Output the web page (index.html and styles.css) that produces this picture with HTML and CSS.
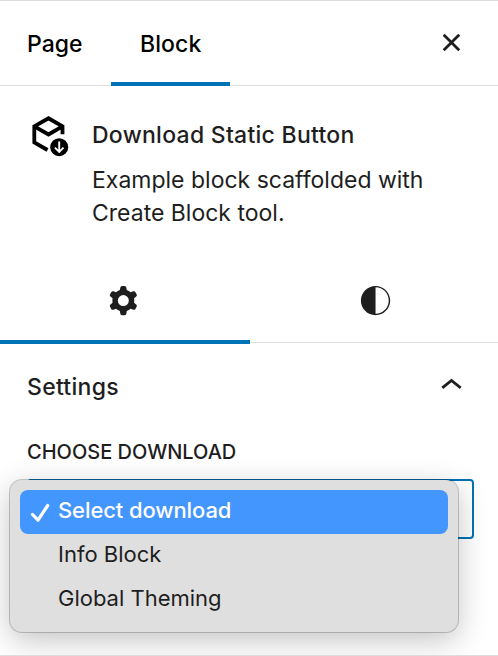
FILE: index.html
```html
<!DOCTYPE html>
<html lang="en">
<head>
  <meta charset="UTF-8" />
  <title>Block settings</title>
  <meta name="viewport" content="width=device-width, initial-scale=1" />
  <link rel="stylesheet" href="styles.css">
</head>
<body>

  <div class="sidebar">
    <div class="header">
      <div class="tab tab-page">Page</div>
      <div class="tab tab-block active">Block</div>
      <button class="icon-btn close-btn" aria-label="Close">
        <svg class="icon" viewBox="-0.25 0.25 24 24"><path d="M12 13.06l3.712 3.713 1.061-1.06L13.061 12l3.712-3.712-1.06-1.06L12 10.938 8.288 7.227l-1.061 1.06L10.939 12l-3.712 3.712 1.06 1.061L12 13.061z"/></svg>
      </button>
    </div>

    <div class="block-card">
      <svg class="block-icon" viewBox="0 0 44 50">
        <path class="box" d="M19.500 41L6.300 33.300V17.400L20.500 9.300L34.500 17.400V25.200M6.300 17.400L20.500 25.500L34.500 17.400"/>
        <circle cx="31.200" cy="38.200" r="9"/>
        <path class="arrow" d="M31.200 32.500V43M26.900 38.600L31.200 42.900L35.500 38.600"/>
      </svg>
      <div class="block-info">
        <h2>Download Static Button</h2>
        <p>Example block scaffolded with<br>Create Block tool.</p>
      </div>
    </div>

    <div class="sub-tabs">
      <div class="sub-tab active">
        <svg class="icon" viewBox="-0.25 0.25 24 24"><path fill-rule="evenodd" d="M10.289 4.836A1 1 0 0111.275 4h1.306a1 1 0 01.987.836l.244 1.466c.787.26 1.503.679 2.108 1.218l1.393-.522a1 1 0 011.216.437l.653 1.13a1 1 0 01-.23 1.273l-1.148.944a6.025 6.025 0 010 2.435l1.149.946a1 1 0 01.23 1.272l-.653 1.13a1 1 0 01-1.216.437l-1.394-.522c-.605.54-1.32.958-2.108 1.218l-.244 1.466a1 1 0 01-.987.836h-1.306a1 1 0 01-.986-.836l-.244-1.466a5.995 5.995 0 01-2.108-1.218l-1.394.522a1 1 0 01-1.217-.436l-.653-1.131a1 1 0 01.23-1.272l1.149-.946a6.026 6.026 0 010-2.435l-1.148-.944a1 1 0 01-.23-1.272l.653-1.131a1 1 0 011.217-.437l1.393.522a5.994 5.994 0 012.108-1.218l.244-1.466zM14.929 12a3 3 0 11-6 0 3 3 0 016 0z"/></svg>
      </div>
      <div class="sub-tab">
        <svg class="icon" viewBox="0.25 0.25 24 24"><path d="M12 4c-4.400 0-8 3.600-8 8s3.600 8 8 8 8-3.600 8-8-3.600-8-8-8zm0 15.200V4.800c4 0 7.200 3.200 7.200 7.200s-3.200 7.200-7.200 7.200z"/></svg>
      </div>
    </div>

    <div class="panel">
      <div class="panel-title">
        <h2>Settings</h2>
        <svg class="icon" viewBox="-0.25 0 24 24"><path d="M6.500 12.400L12 8l5.500 4.400-.9 1.200L12 10l-4.500 3.600-1-1.200z"/></svg>
      </div>
      <div class="label">Choose download</div>
      <div class="select">
        <ul class="menu">
          <li class="selected">
            <svg class="check" viewBox="0 0 20 20"><path d="M2.500 12.500L8 18.200L17.700 3.500"/></svg>
            <span>Select download</span>
          </li>
          <li><span>Info Block</span></li>
          <li><span>Global Theming</span></li>
        </ul>
      </div>
    </div>
  </div>

</body>
</html>
```
FILE: styles.css
```css
body {
  margin: 0;
  font-family: Inter, "Liberation Sans", sans-serif;
  font-size: 23px;
  color: #1e1e1e;
  background: #fff;
}

h2,
p,
ul {
  margin: 0;
  padding: 0;
}
h2 {
  font-size: 23px;
  font-weight: 500;
  letter-spacing: 0.27px;
}

.sidebar {
  box-sizing: border-box;
  height: 656px;
  overflow: hidden;
  border-top: 1px solid #ddd;
  border-bottom: 1px solid #ddd;
}

.icon {
  display: block;
  width: 44px;
  height: 44px;
  fill: #1e1e1e;
}

.header {
  display: flex;
  box-sizing: border-box;
  height: 85px;
  border-bottom: 1px solid #ddd;
}
.tab {
  box-sizing: border-box;
  height: 85px;
  line-height: 86px;
  font-weight: 500;
  color: #000;
}
.tab-page {
  width: 111px;
  padding-left: 27px;
}
.tab-block {
  width: 119px;
  padding-left: 29px;
  letter-spacing: 0.1px;
}
.tab.active {
  box-shadow: inset 0 -4px #0073b6;
}
.icon-btn {
  padding: 0;
  border: none;
  background: none;
  cursor: pointer;
}
.close-btn {
  margin: 0 25px 0 auto;
}

.block-card {
  display: flex;
  height: 173px;
  padding-left: 28px;
}
.block-icon {
  width: 44px;
  height: 50px;
  margin-top: 23px;
}
.block-icon .box {
  fill: none;
  stroke: #000;
  stroke-width: 3.8;
}
.block-icon .arrow {
  fill: none;
  stroke: #fff;
  stroke-width: 1.9;
}
.block-info {
  margin: 32px 0 0 20px;
}
.block-info h2 {
  line-height: 34px;
  white-space: nowrap;
}
.block-info p {
  margin-top: 12px;
  line-height: 33px;
  white-space: nowrap;
}

.sub-tabs {
  display: flex;
  box-sizing: border-box;
  height: 84px;
  border-bottom: 1px solid #ddd;
}
.sub-tab {
  box-sizing: border-box;
  flex: 0 0 250px;
  height: 85px;
  padding: 20px 0 0 101px;
}
.sub-tab.active {
  box-shadow: inset 0 -4px #0073b6;
}
.sub-tab + .sub-tab {
  flex: 1;
  padding-left: 104px;
}

.panel {
  padding: 0 24px 0 27px;
}
.panel-title {
  display: flex;
  justify-content: space-between;
  align-items: center;
  height: 88px;
}
.panel-title .icon {
  margin: -2px 1px 0 0;
}
.label {
  font-size: 20px;
  font-weight: 500;
  line-height: 42px;
  text-transform: uppercase;
}
.select {
  position: relative;
  box-sizing: border-box;
  height: 60px;
  margin-top: 6px;
  border: 2px solid #0073b6;
  border-radius: 4px;
}

/* open dropdown, on top of the select */
.menu {
  position: absolute;
  top: -1px;
  left: -19px;
  box-sizing: border-box;
  width: 448px;
  height: 152px;
  padding: 10px;
  list-style: none;
  background: #dfdfdf;
  border-radius: 12px;
  box-shadow: 0 0 0 1px rgba(0,0,0,0.2), 0 8px 30px rgba(0,0,0,0.24);
}
.menu li {
  display: flex;
  align-items: center;
  height: 44px;
  padding-left: 38px;
  font-size: 22px;
}
.menu li span {
  padding-bottom: 4px;
}
.menu li.selected {
  padding-left: 10px;
  color: #fff;
  background: #4496ff;
  border-radius: 8px;
  font-weight: 500;
  letter-spacing: -0.1px;
}
.check {
  width: 20px;
  height: 20px;
  margin-right: 8px;
  fill: none;
  stroke: #fff;
  stroke-width: 3.2;
  stroke-linecap: round;
  stroke-linejoin: round;
}
```
